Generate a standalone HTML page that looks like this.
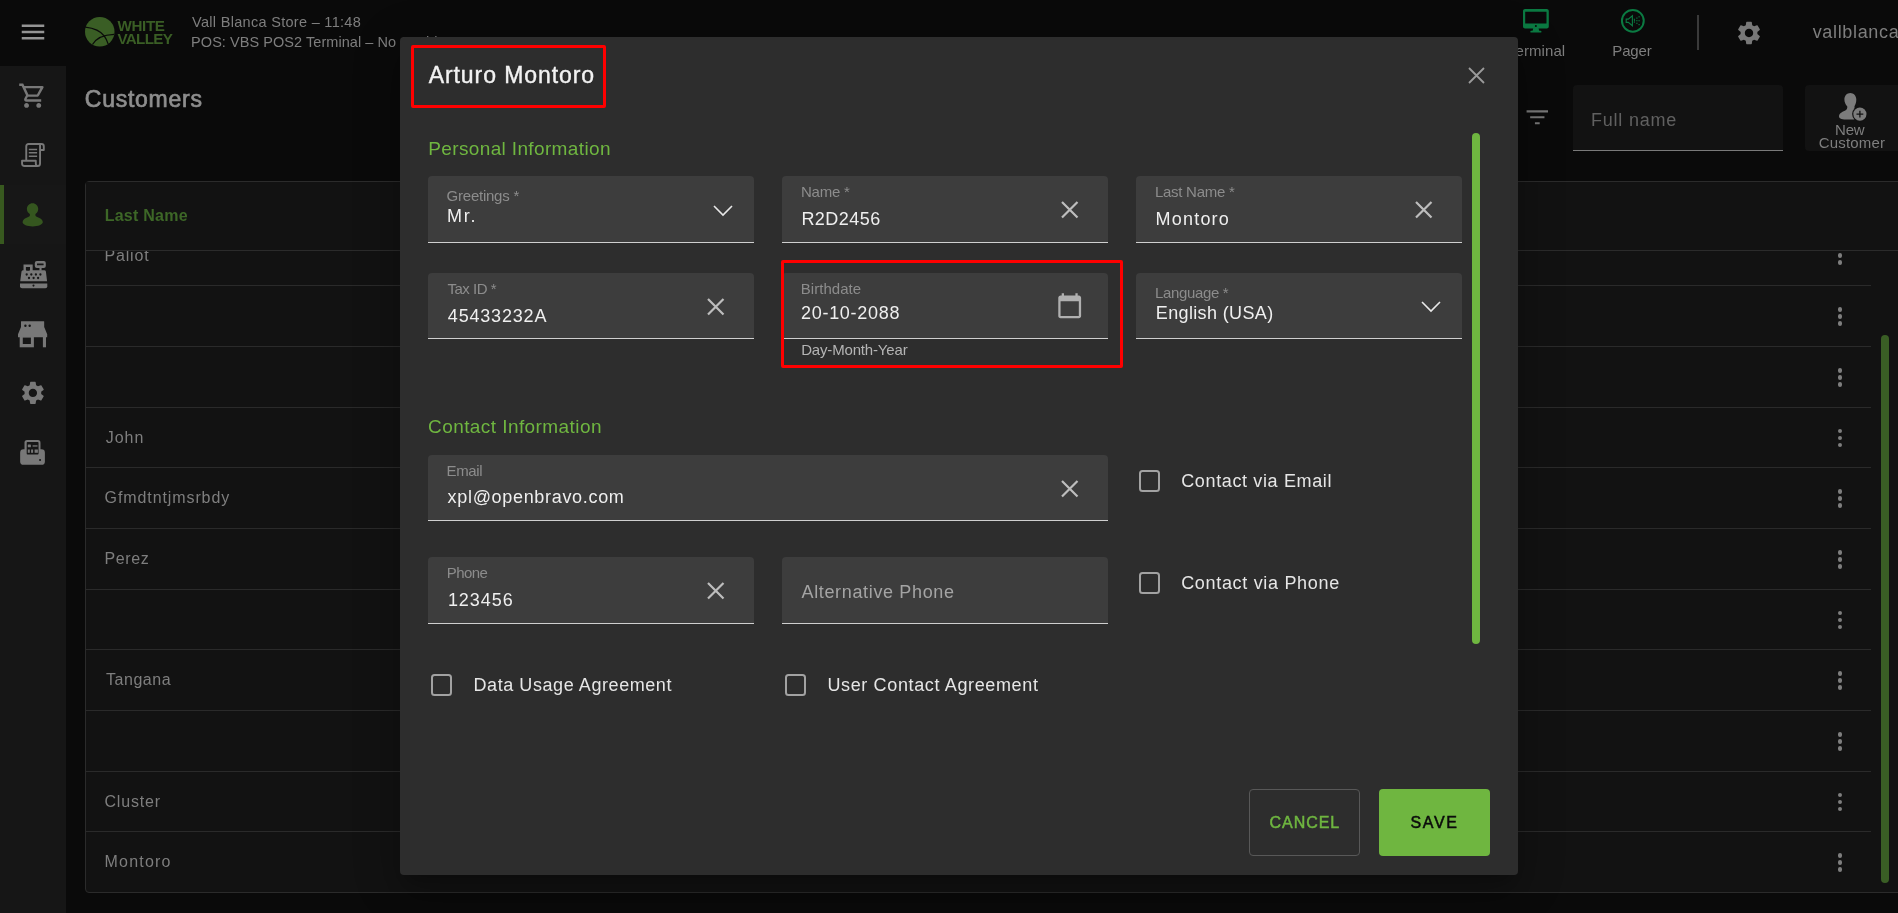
<!DOCTYPE html>
<html lang="en">
<head>
<meta charset="utf-8">
<title>Customers - Arturo Montoro</title>
<style>
*{box-sizing:border-box;margin:0;padding:0}
html,body{width:1898px;height:913px;overflow:hidden;background:#0a0a0a}
body{font-family:"Liberation Sans",sans-serif;color:#8a8a8a;position:relative}
#app{position:absolute;left:0;top:0;width:1898px;height:913px;overflow:hidden;will-change:transform}
.abs,.t{position:absolute}
.t{white-space:nowrap;line-height:1}
svg{position:absolute;overflow:visible}
/* ---------- background app ---------- */
#side{left:0;top:66px;width:66px;height:847px;background:#161616}
#side-act{left:0;top:185px;width:66px;height:59px;background:#171717}
#side-bar{left:0;top:185px;width:4px;height:59px;background:#38591f}
#tbl{left:85px;top:181px;width:1830px;height:712px;background:#121212;border:1px solid #2b2b2b;border-radius:4px}
.rl{position:absolute;left:86px;height:1px;background:#2a2a2a;width:1785px}
.row{color:#7e7e7e;font-size:16px}
.dots{position:absolute;left:1837.9px;width:6px;height:20px}
.dots i{position:absolute;left:0;width:4.6px;height:4.6px;border-radius:50%;background:#7e7e7e}
#sb2{left:1881px;top:335px;width:8px;height:548px;border-radius:4px;background:#3a5e25}
#search{left:1573px;top:85px;width:210px;height:66px;background:#121212;border-bottom:1px solid #7a7a7a;border-radius:4px 4px 0 0}
#newc{left:1805px;top:85px;width:93px;height:66px;background:#121212;border-radius:4px 0 0 4px}
/* ---------- dialog ---------- */
#dlg{left:400px;top:37px;width:1118px;height:838px;background:#2d2d2d;border-radius:4px;box-shadow:0 11px 15px -7px rgba(0,0,0,.2),0 24px 38px 3px rgba(0,0,0,.14),0 9px 46px 8px rgba(0,0,0,.12)}
.red{position:absolute;border:3px solid #ff0000;border-radius:2px}
.fld{position:absolute;height:67px;background:#3d3d3d;border-bottom:1px solid #cfcfcf;border-radius:4px 4px 0 0}
.cb{position:absolute;width:21.5px;height:21.5px;border:2.4px solid #a2a2a2;border-radius:3.5px}
#dsb{left:1472px;top:133px;width:8px;height:511px;border-radius:4px;background:#6fb640}
.btn{position:absolute;top:789px;width:111px;height:67px;border-radius:4px}
#cancel{left:1249px;border:1px solid #585858}
#save{left:1379px;background:#6fb640}
</style>
</head>
<body>
<div id="app">
<!-- ================= BACKGROUND APP ================= -->
<div class="abs" id="side"></div>
<div class="abs" id="side-act"></div>
<div class="abs" id="side-bar"></div>


<div class="abs" style="left:1697px;top:15px;width:2px;height:35px;background:#3a3a3a"></div>
<div class="abs" id="search"></div>
<div class="abs" id="newc"></div>

<!-- table -->
<div class="abs" id="tbl"></div>
<div class="rl" style="top:285px"></div>
<div class="rl" style="top:346px"></div>
<div class="rl" style="top:407px"></div>
<div class="rl" style="top:467px"></div>
<div class="rl" style="top:528px"></div>
<div class="rl" style="top:589px"></div>
<div class="rl" style="top:649px"></div>
<div class="rl" style="top:710px"></div>
<div class="rl" style="top:771px"></div>
<div class="rl" style="top:831px"></div>
<div class="t row" style="left:104.6px;top:248px;letter-spacing:0.80px">Paliot</div>
<div class="dots" style="top:246.1px"><i style="top:0"></i><i style="top:7px"></i><i style="top:14px"></i></div>
<div class="dots" style="top:307.1px"><i style="top:0"></i><i style="top:7px"></i><i style="top:14px"></i></div>
<div class="dots" style="top:368.1px"><i style="top:0"></i><i style="top:7px"></i><i style="top:14px"></i></div>
<div class="t row" style="left:105.7px;top:430px;letter-spacing:0.97px">John</div>
<div class="dots" style="top:428.6px"><i style="top:0"></i><i style="top:7px"></i><i style="top:14px"></i></div>
<div class="t row" style="left:104.6px;top:490px;letter-spacing:0.90px">Gfmdtntjmsrbdy</div>
<div class="dots" style="top:489.1px"><i style="top:0"></i><i style="top:7px"></i><i style="top:14px"></i></div>
<div class="t row" style="left:104.6px;top:551px;letter-spacing:0.57px">Perez</div>
<div class="dots" style="top:550.1px"><i style="top:0"></i><i style="top:7px"></i><i style="top:14px"></i></div>
<div class="dots" style="top:610.6px"><i style="top:0"></i><i style="top:7px"></i><i style="top:14px"></i></div>
<div class="t row" style="left:106.0px;top:672px;letter-spacing:0.53px">Tangana</div>
<div class="dots" style="top:671.1px"><i style="top:0"></i><i style="top:7px"></i><i style="top:14px"></i></div>
<div class="dots" style="top:732.1px"><i style="top:0"></i><i style="top:7px"></i><i style="top:14px"></i></div>
<div class="t row" style="left:104.5px;top:794px;letter-spacing:0.80px">Cluster</div>
<div class="dots" style="top:792.6px"><i style="top:0"></i><i style="top:7px"></i><i style="top:14px"></i></div>
<div class="t row" style="left:104.5px;top:854px;letter-spacing:1.22px">Montoro</div>
<div class="dots" style="top:853.1px"><i style="top:0"></i><i style="top:7px"></i><i style="top:14px"></i></div>

<div class="abs" style="left:86px;top:182px;width:1812px;height:68px;background:#121212"></div>
<div class="abs" style="left:86px;top:250px;width:1812px;height:1px;background:#2b2b2b"></div>
<div class="abs" id="sb2"></div>
<!-- hamburger -->
<svg style="left:17.9px;top:17.2px" width="30" height="30" viewBox="0 0 24 24"><path fill="#949494" d="M3 18h18v-2H3v2zm0-5h18v-2H3v2zm0-7v2h18V6H3z"/></svg>
<!-- logo -->
<svg style="left:85px;top:17px" width="29.5" height="29.5" viewBox="0 0 30 30"><circle cx="15" cy="15" r="15" fill="#3a5e25"/><path d="M0.3 10.2 C 9 11.2 16.5 15 19.5 19.2 C 21.5 22 22.8 25 23.6 27.6" fill="none" stroke="#0a0a0a" stroke-width="1.3"/><path d="M7.6 28 C 11 22 19 18 29.6 17.6" fill="none" stroke="#0a0a0a" stroke-width="1.3"/></svg>
<!-- sidebar: cart -->
<svg style="left:17.6px;top:80.75px" width="29.3" height="29.3" viewBox="0 0 24 24"><path fill="#787878" d="M15.55 13c.75 0 1.41-.41 1.75-1.03l3.58-6.49c.37-.66-.11-1.48-.87-1.48H5.210l-.94-2H1v2h2l3.600 7.590-1.350 2.440C4.520 15.370 5.480 17 7 17h12v-2H7l1.100-2h7.450zM6.160 6h12.150l-2.760 5H8.530L6.160 6zM7 18c-1.100 0-1.990.9-1.990 2S5.900 22 7 22s2-.9 2-2-.9-2-2-2zm10 0c-1.100 0-1.990.9-1.990 2s.89 2 1.990 2 2-.9 2-2-.9-2-2-2z"/></svg>
<!-- sidebar: receipt scroll -->
<svg style="left:21px;top:143px" width="24" height="24" viewBox="0 0 24 24" fill="none" stroke="#787878" stroke-width="1.900" stroke-linejoin="round" stroke-linecap="butt"><path d="M5.250 17.700V3.400Q5.250 1.050 7.600 1.050H20.400Q22.800 1.050 22.800 3.400V7.050H19.050"/><path d="M19.050 2V20.500Q19.050 23.050 16.600 23.050H3.500Q1.050 23.050 1.050 20.600V17.700H14.800V20.600Q14.800 23.050 16.900 23.050"/><path d="M7.800 6.500H16.100M7.800 9.850H16.100M7.800 13.300H16.100" stroke-width="1.500"/></svg>
<!-- sidebar: person (active) -->
<svg style="left:22px;top:202.700px" width="21" height="24" viewBox="0 0 21 24"><path fill="#35561f" d="M10.550 0.200C7.400 0.200 4.900 2.700 4.900 5.900C4.900 8.100 6.100 9.900 7.800 10.900C8.200 12.500 7.700 13.300 6.200 13.900C3 15 0.600 16.600 0.600 19.100C0.600 21.900 5.200 23.500 10.600 23.500C16 23.500 20.800 21.900 20.800 19.100C20.800 16.600 18.400 15 15.200 13.900C13.700 13.300 13.100 12.500 13.500 10.900C15.100 9.900 16.200 8.100 16.200 5.900C16.200 2.700 13.700 0.200 10.550 0.200Z"/></svg>
<!-- sidebar: cash register -->
<svg style="left:19.800px;top:260.600px" width="27.400" height="27.400" viewBox="0 0 27.400 27.400"><g fill="#787878"><path d="M3.500 3.400H12.700V9.300H24.300Q25.600 9.300 25.900 10.600L27.100 20.200H0.200L1.500 10.600Q1.800 9.300 3.500 9.300Z"/><path d="M0 22.400H27.300V25.300Q27.300 27.300 25.300 27.300H2Q0 27.300 0 25.300Z"/><rect x="14.800" y="0.100" width="11" height="6.800" rx="2"/><rect x="19.450" y="6.500" width="2.150" height="3.200"/></g><g fill="#161616"><path d="M5.900 6H10V8.700Q10 9.700 9 9.700H6.900Q5.900 9.700 5.900 8.700Z"/><rect x="17" y="2.500" width="6.600" height="1.800" rx=".3"/><circle cx="6.700" cy="13.500" r="1.150"/><circle cx="11.300" cy="13.500" r="1.150"/><circle cx="15.900" cy="13.500" r="1.150"/><circle cx="20.400" cy="13.500" r="1.150"/><circle cx="9" cy="17" r="1.150"/><circle cx="13.600" cy="17" r="1.150"/><circle cx="18.100" cy="17" r="1.150"/><circle cx="13.500" cy="24.600" r="1.050"/></g></svg>
<!-- sidebar: store -->
<svg style="left:18.100px;top:320.700px" width="29.200" height="26.600" viewBox="0 0 29.200 26.600"><g fill="#787878"><path d="M3.400 0.200H25.800Q26.200 0.200 26.200 0.600V5.900L29.200 13.200V16.200H0V13.200L3 5.900V0.600Q3 0.200 3.400 0.200Z"/><rect x="1.700" y="16" width="14.200" height="10.300"/><rect x="24.900" y="16" width="3.100" height="10.300"/></g><g fill="#161616"><rect x="4.800" y="16.600" width="8.100" height="6.400"/><circle cx="7.400" cy="4.700" r="1.200"/><circle cx="11.700" cy="4.700" r="1.200"/></g></svg>
<!-- sidebar: gear -->
<svg style="left:19.200px;top:379px" width="27.800" height="27.800" viewBox="0 0 24 24"><path fill="#787878" d="M19.140 12.940c.04-.3.060-.61.060-.94 0-.32-.02-.64-.07-.94l2.030-1.580c.18-.14.230-.41.120-.61l-1.920-3.320c-.12-.22-.37-.29-.59-.22l-2.390.96c-.5-.38-1.030-.7-1.620-.94l-.36-2.540c-.04-.24-.24-.41-.48-.41h-3.840c-.24 0-.43.170-.47.410l-.36 2.540c-.59.240-1.130.570-1.620.94l-2.390-.96c-.22-.08-.47 0-.59.220L2.740 8.870c-.12.210-.08.470.12.610l2.030 1.580c-.05.300-.09.630-.09.940s.02.640.07.940l-2.030 1.580c-.18.140-.23.410-.12.610l1.920 3.320c.12.220.37.290.59.220l2.390-.96c.5.380 1.030.7 1.620.94l.36 2.540c.05.240.24.410.48.410h3.840c.24 0 .44-.17.470-.41l.36-2.540c.59-.24 1.130-.56 1.620-.94l2.390.96c.22.080.47 0 .59-.22l1.920-3.320c.12-.22.070-.47-.12-.61l-2.010-1.580zM12 15.600c-1.980 0-3.600-1.620-3.600-3.600s1.620-3.600 3.600-3.600 3.600 1.620 3.600 3.600-1.620 3.600-3.600 3.600z"/></svg>
<!-- sidebar: fax/pos -->
<svg style="left:20.300px;top:440.400px" width="25.200" height="25" viewBox="0 0 25.200 25"><g fill="#787878"><rect x="0.150" y="9.300" width="24.750" height="15.500" rx="3.400"/><rect x="4.500" y="0.100" width="16" height="15.100" rx="2.600"/></g><g fill="#161616"><rect x="6.700" y="2" width="11.850" height="12.500" rx=".8"/></g><g fill="#787878"><rect x="7.800" y="4.500" width="3.100" height="2.800" rx=".6"/><rect x="12.600" y="5.300" width="4.900" height="1.300"/><rect x="7.800" y="9.500" width="2" height="3.300"/><rect x="11.100" y="9.500" width="2" height="3.300"/><rect x="14.600" y="9.500" width="3.300" height="3.300"/></g><circle cx="20.100" cy="19.900" r="1" fill="#161616"/></svg>
<!-- header: terminal monitor -->
<svg style="left:1523.200px;top:9.300px" width="25.800" height="23.600" viewBox="0 0 25.800 23.600"><path fill="#0b7a42" fill-rule="evenodd" d="M2 0H23.800C24.900 0 25.800 .9 25.800 2V17.400C25.800 18.500 24.900 19.400 23.800 19.400H15.600L16.200 21.800H17.600C18.100 21.800 18.500 22.200 18.500 22.700S18.100 23.600 17.600 23.600H8.200C7.700 23.600 7.300 23.200 7.300 22.700S7.700 21.800 8.200 21.800H9.600L10.200 19.400H2C.9 19.400 0 18.500 0 17.400V2C0 .9 .9 0 2 0ZM2.200 2.650V14.500H23.500V2.650Z"/><circle cx="12.900" cy="16.900" r="1" fill="#0a0a0a"/></svg>
<!-- header: pager -->
<svg style="left:1621.200px;top:9.300px" width="23.700" height="23.700" viewBox="0 0 23.700 23.700"><circle cx="11.850" cy="11.850" r="10.900" fill="none" stroke="#0b7a42" stroke-width="2"/><path d="M5.200 10.100H7.300L11.400 6.700V16.800L7.300 13.400H5.200Z" fill="none" stroke="#0b7a42" stroke-width="1.150" stroke-linejoin="miter"/><g fill="#0b7a42"><rect x="12.90" y="11.10" width="1.200" height="1.200"/><rect x="15.30" y="11.10" width="1.200" height="1.200"/><rect x="17.50" y="11.10" width="1.200" height="1.200"/><rect x="12.80" y="9.70" width="1.200" height="1.200"/><rect x="15.30" y="8.50" width="1.200" height="1.200"/><rect x="17.50" y="7.20" width="1.200" height="1.200"/><rect x="12.80" y="12.50" width="1.200" height="1.200"/><rect x="15.30" y="13.70" width="1.200" height="1.200"/><rect x="17.50" y="15.00" width="1.200" height="1.200"/></g></svg>
<!-- header: gear -->
<svg style="left:1734.900px;top:18.900px" width="28" height="28" viewBox="0 0 24 24"><path fill="#787878" d="M19.140 12.940c.04-.3.060-.61.060-.94 0-.32-.02-.64-.07-.94l2.030-1.580c.18-.14.230-.41.120-.61l-1.920-3.320c-.12-.22-.37-.29-.59-.22l-2.390.96c-.5-.38-1.030-.7-1.620-.94l-.36-2.540c-.04-.24-.24-.41-.48-.41h-3.840c-.24 0-.43.170-.47.410l-.36 2.540c-.59.240-1.130.570-1.620.94l-2.390-.96c-.22-.08-.47 0-.59.220L2.740 8.870c-.12.210-.08.470.12.610l2.030 1.580c-.05.300-.09.630-.09.940s.02.640.07.940l-2.030 1.580c-.18.140-.23.410-.12.610l1.920 3.320c.12.220.37.290.59.220l2.390-.96c.5.380 1.030.7 1.620.94l.36 2.540c.05.240.24.410.48.410h3.840c.24 0 .44-.17.470-.41l.36-2.540c.59-.24 1.130-.56 1.620-.94l2.390.96c.22.080.47 0 .59-.22l1.920-3.320c.12-.22.070-.47-.12-.61l-2.010-1.580zM12 15.600c-1.980 0-3.600-1.620-3.600-3.600s1.620-3.600 3.600-3.600 3.600 1.620 3.600 3.600-1.620 3.600-3.600 3.600z"/></svg>
<!-- filter -->
<svg style="left:1522.750px;top:103px" width="28.600" height="28.600" viewBox="0 0 24 24"><path fill="#787878" d="M10 17.900h4v-1.800h-4v1.800zM3 6.100v1.800h18V6.100H3zm3 6.800h12v-1.800H6v1.800z"/></svg>
<!-- new customer icon -->
<svg style="left:1838.800px;top:92.600px" width="28" height="28" viewBox="0 0 28 28"><path fill="#7c7c7c" d="M11.300 0C8 0 5.400 2.800 5.400 6.400C5.400 9.200 6.600 11.600 8.200 13.200C8.600 15.400 7.800 16.800 5.800 17.800C2.600 19.200 0 20.800 0 23.400C0 25.600 3.600 26.600 9 26.600H15.500V13.200C16.600 11.400 17.300 9 17.300 6.400C17.300 2.800 14.600 0 11.300 0Z"/><circle cx="20.900" cy="21.100" r="7.800" fill="#121212"/><circle cx="20.900" cy="21.100" r="6.600" fill="#7c7c7c"/><path d="M17.500 21.100H24.300M20.900 17.700V24.500" stroke="#121212" stroke-width="1.300" fill="none"/></svg>

<div class="t" style="left:192.1px;top:15px;font-size:14.5px;letter-spacing:0.30px;color:#7e7e7e">Vall Blanca Store – 11:48</div>
<div class="t" style="left:191.1px;top:35px;font-size:14.5px;letter-spacing:0.05px;color:#7e7e7e">POS: VBS POS2 Terminal – No Cashier</div>
<div class="t" style="left:117.5px;top:18px;font-size:15.2px;letter-spacing:-0.38px;color:#3a5e25;font-weight:bold">WHITE</div>
<div class="t" style="left:117.5px;top:31px;font-size:15.2px;letter-spacing:-0.70px;color:#3a5e25;font-weight:bold">VALLEY</div>
<div class="t" style="left:1508.0px;top:43px;font-size:15px;letter-spacing:0.07px;color:#7e7e7e">Terminal</div>
<div class="t" style="left:1612.3px;top:43px;font-size:15px;letter-spacing:-0.15px;color:#7e7e7e">Pager</div>
<div class="t" style="left:1812.7px;top:23px;font-size:18px;letter-spacing:0.66px;color:#7e7e7e">vallblanca</div>
<div class="t" style="left:84.8px;top:88px;font-size:23px;letter-spacing:0.74px;color:#8e8e8e;-webkit-text-stroke:.7px #8e8e8e">Customers</div>
<div class="t" style="left:1591.0px;top:111px;font-size:18px;letter-spacing:0.78px;color:#606060">Full name</div>
<div class="t" style="left:1835.0px;top:122px;font-size:15px;letter-spacing:-0.15px;color:#7e7e7e">New</div>
<div class="t" style="left:1818.7px;top:135px;font-size:15px;letter-spacing:0.20px;color:#7e7e7e">Customer</div>
<div class="t" style="left:104.7px;top:208px;font-size:16px;letter-spacing:0.25px;color:#3d6727;font-weight:bold">Last Name</div>

<!-- ================= DIALOG ================= -->
<div class="abs" id="dlg"></div>
<!-- close X -->
<svg style="left:1467.500px;top:66.500px" width="17" height="17" viewBox="0 0 17 17"><path d="M1 1L16 16M16 1L1 16" stroke="#9a9a9a" stroke-width="1.800" fill="none"/></svg>
<!-- fields -->
<div class="fld" style="left:428px;top:176px;width:326px"></div>
<div class="fld" style="left:782px;top:176px;width:326px"></div>
<div class="fld" style="left:1136px;top:176px;width:326px"></div>
<div class="fld" style="left:428px;top:273px;width:326px;height:66px"></div>
<div class="fld" style="left:782px;top:273px;width:326px;height:66px"></div>
<div class="fld" style="left:1136px;top:273px;width:326px;height:66px"></div>
<div class="fld" style="left:428px;top:455px;width:680px;height:66px"></div>
<div class="fld" style="left:428px;top:557px;width:326px"></div>
<div class="fld" style="left:782px;top:557px;width:326px"></div>
<!-- chevrons -->
<svg style="left:713px;top:204.500px" width="20" height="12" viewBox="0 0 20 12"><path d="M1 1L10 10L19 1" stroke="#e8e8e8" stroke-width="1.600" fill="none"/></svg>
<svg style="left:1421px;top:301px" width="20" height="12" viewBox="0 0 20 12"><path d="M1 1L10 10L19 1" stroke="#e8e8e8" stroke-width="1.600" fill="none"/></svg>
<!-- clear X icons -->
<svg class="cx" style="left:1061px;top:201px" width="17.500" height="17.500" viewBox="0 0 17.500 17.500"><path d="M1 1L16.500 16.500M16.500 1L1 16.500" stroke="#bdbdbd" stroke-width="2.200" fill="none"/></svg>
<svg class="cx" style="left:1415px;top:201px" width="17.500" height="17.500" viewBox="0 0 17.500 17.500"><path d="M1 1L16.500 16.500M16.500 1L1 16.500" stroke="#bdbdbd" stroke-width="2.200" fill="none"/></svg>
<svg class="cx" style="left:707px;top:297.500px" width="17.500" height="17.500" viewBox="0 0 17.500 17.500"><path d="M1 1L16.500 16.500M16.500 1L1 16.500" stroke="#bdbdbd" stroke-width="2.200" fill="none"/></svg>
<svg class="cx" style="left:1061px;top:479.500px" width="17.500" height="17.500" viewBox="0 0 17.500 17.500"><path d="M1 1L16.500 16.500M16.500 1L1 16.500" stroke="#bdbdbd" stroke-width="2.200" fill="none"/></svg>
<svg class="cx" style="left:707px;top:582px" width="17.500" height="17.500" viewBox="0 0 17.500 17.500"><path d="M1 1L16.500 16.500M16.500 1L1 16.500" stroke="#bdbdbd" stroke-width="2.200" fill="none"/></svg>
<!-- calendar -->
<svg style="left:1056.200px;top:291.900px" width="27.400" height="27.400" viewBox="0 0 24 24"><path fill="#b0b0b0" d="M20 3h-1V1h-2v2H7V1H5v2H4c-1.100 0-2 .9-2 2v16c0 1.100.9 2 2 2h16c1.100 0 2-.9 2-2V5c0-1.100-.9-2-2-2zm0 18H4V8h16v13z"/></svg>
<!-- checkboxes -->
<div class="cb" style="left:1138.7px;top:470.3px"></div>
<div class="cb" style="left:1138.7px;top:572.3px"></div>
<div class="cb" style="left:430.7px;top:674.3px"></div>
<div class="cb" style="left:784.6px;top:674.3px"></div>
<!-- scrollbar + buttons -->
<div class="abs" id="dsb"></div>
<div class="btn" id="cancel"></div>
<div class="btn" id="save"></div>

<div class="t" style="left:428.7px;top:64px;font-size:23px;letter-spacing:0.92px;color:#f2f2f2;-webkit-text-stroke:.4px #f2f2f2">Arturo Montoro</div>
<div class="t" style="left:428.3px;top:139px;font-size:19px;letter-spacing:0.36px;color:#6fb640">Personal Information</div>
<div class="t" style="left:428.0px;top:417px;font-size:19px;letter-spacing:0.43px;color:#6fb640">Contact Information</div>
<div class="t" style="left:446.6px;top:188px;font-size:15px;letter-spacing:-0.24px;color:#8c8c8c">Greetings *</div>
<div class="t" style="left:447.0px;top:207px;font-size:18px;letter-spacing:1.75px;color:#efefef">Mr.</div>
<div class="t" style="left:800.9px;top:184px;font-size:15px;letter-spacing:-0.19px;color:#8c8c8c">Name *</div>
<div class="t" style="left:801.4px;top:210px;font-size:18px;letter-spacing:0.48px;color:#efefef">R2D2456</div>
<div class="t" style="left:1154.9px;top:184px;font-size:15px;letter-spacing:-0.26px;color:#8c8c8c">Last Name *</div>
<div class="t" style="left:1155.6px;top:210px;font-size:18px;letter-spacing:1.20px;color:#efefef">Montoro</div>
<div class="t" style="left:447.4px;top:281px;font-size:15px;letter-spacing:-0.46px;color:#8c8c8c">Tax ID *</div>
<div class="t" style="left:447.8px;top:307px;font-size:18px;letter-spacing:0.82px;color:#efefef">45433232A</div>
<div class="t" style="left:800.8px;top:281px;font-size:15px;letter-spacing:0.03px;color:#8c8c8c">Birthdate</div>
<div class="t" style="left:801.0px;top:304px;font-size:18px;letter-spacing:0.71px;color:#efefef">20-10-2088</div>
<div class="t" style="left:801.2px;top:342px;font-size:15px;letter-spacing:-0.17px;color:#b4b4b4">Day-Month-Year</div>
<div class="t" style="left:1154.9px;top:285px;font-size:15px;letter-spacing:-0.34px;color:#8c8c8c">Language *</div>
<div class="t" style="left:1155.8px;top:304px;font-size:18px;letter-spacing:0.36px;color:#efefef">English (USA)</div>
<div class="t" style="left:446.6px;top:463px;font-size:15px;letter-spacing:-0.38px;color:#8c8c8c">Email</div>
<div class="t" style="left:447.6px;top:488px;font-size:18px;letter-spacing:0.68px;color:#efefef">xpl@openbravo.com</div>
<div class="t" style="left:1181.2px;top:472px;font-size:18px;letter-spacing:0.64px;color:#e6e6e6">Contact via Email</div>
<div class="t" style="left:446.8px;top:565px;font-size:15px;letter-spacing:-0.59px;color:#8c8c8c">Phone</div>
<div class="t" style="left:447.9px;top:591px;font-size:18px;letter-spacing:0.94px;color:#efefef">123456</div>
<div class="t" style="left:801.5px;top:583px;font-size:18px;letter-spacing:0.65px;color:#a4a4a4">Alternative Phone</div>
<div class="t" style="left:1181.2px;top:574px;font-size:18px;letter-spacing:0.68px;color:#e6e6e6">Contact via Phone</div>
<div class="t" style="left:473.5px;top:676px;font-size:18px;letter-spacing:0.57px;color:#e6e6e6">Data Usage Agreement</div>
<div class="t" style="left:827.4px;top:676px;font-size:18px;letter-spacing:0.64px;color:#e6e6e6">User Contact Agreement</div>
<div class="t" style="left:1269.5px;top:815px;font-size:16px;letter-spacing:0.97px;color:#6fb640;-webkit-text-stroke:.5px #6fb640">CANCEL</div>
<div class="t" style="left:1410.5px;top:815px;font-size:16px;letter-spacing:1.63px;color:#0b0b0b;-webkit-text-stroke:.5px #0b0b0b">SAVE</div>
<div class="red" style="left:411px;top:45px;width:195px;height:63px"></div>
<div class="red" style="left:781px;top:260px;width:342px;height:108px"></div>
</div>
</body>
</html>
